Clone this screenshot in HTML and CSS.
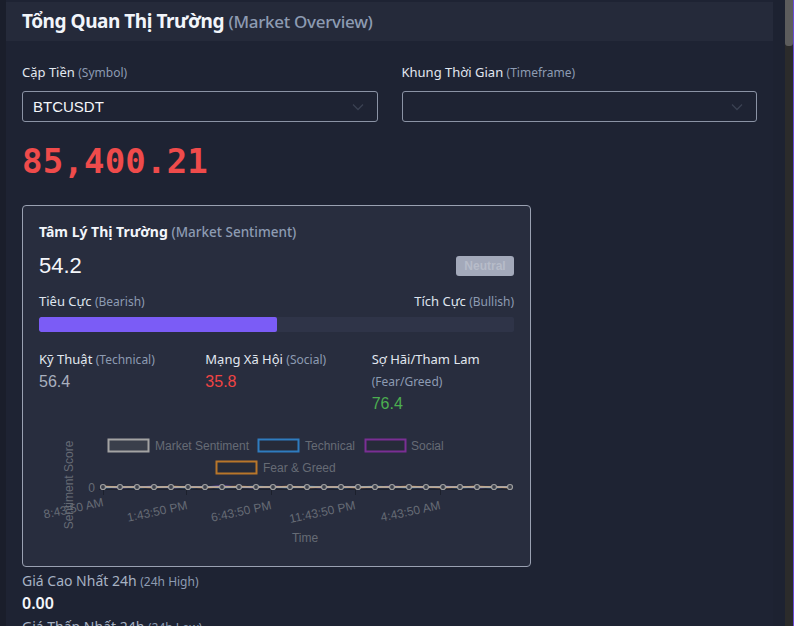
FILE: index.html
```html
<!DOCTYPE html>
<html lang="vi">
<head>
<meta charset="utf-8">
<title>Market Overview</title>
<link rel="stylesheet" href="styles.css">
</head>
<body>
<div class="app">
  <div class="page">
    <div class="strip"></div>
    <main class="main">
      <header class="hdr">
        <h1>Tổng Quan Thị Trường <span class="en">(Market Overview)</span></h1>
      </header>
      <div class="content">
        <div class="fields">
          <div class="field">
            <div class="label">Cặp Tiền <span class="en">(Symbol)</span></div>
            <div class="select">
              <span class="val">BTCUSDT</span>
              <svg class="chev" width="12" height="8" viewBox="0 0 12 8"><path d="M1 1.5l5 5 5-5" fill="none" stroke="currentColor" stroke-width="1.3"/></svg>
            </div>
          </div>
          <div class="field">
            <div class="label">Khung Thời Gian <span class="en">(Timeframe)</span></div>
            <div class="select">
              <span class="val"></span>
              <svg class="chev" width="12" height="8" viewBox="0 0 12 8"><path d="M1 1.5l5 5 5-5" fill="none" stroke="currentColor" stroke-width="1.3"/></svg>
            </div>
          </div>
        </div>

        <div class="price">85,400.21</div>

        <section class="card">
          <h2>Tâm Lý Thị Trường <span class="en">(Market Sentiment)</span></h2>
          <div class="score-row">
            <div class="score">54.2</div>
            <div class="badge">Neutral</div>
          </div>
          <div class="bear-bull">
            <span>Tiêu Cực <span class="en">(Bearish)</span></span>
            <span>Tích Cực <span class="en">(Bullish)</span></span>
          </div>
          <div class="bar"><div class="fill" style="width:50.1%"></div></div>

          <div class="metrics">
            <div class="metric">
              <div class="m-label">Kỹ Thuật <span class="en">(Technical)</span></div>
              <div class="m-val grey">56.4</div>
            </div>
            <div class="metric">
              <div class="m-label">Mạng Xã Hội <span class="en">(Social)</span></div>
              <div class="m-val red">35.8</div>
            </div>
            <div class="metric">
              <div class="m-label">Sợ Hãi/Tham Lam <span class="en">(Fear/Greed)</span></div>
              <div class="m-val green">76.4</div>
            </div>
          </div>

          <svg class="chart" width="475" height="129" viewBox="0 0 475 129">
            <g class="legend">
              <rect x="69.5" y="19.5" width="40" height="12" fill="#3a3f4b" stroke="#a3a3a3" stroke-width="2"/>
              <text x="116" y="29.5">Market Sentiment</text>
              <rect x="219.5" y="19.5" width="40" height="12" fill="#262b39" stroke="#2f7cbf" stroke-width="2"/>
              <text x="266" y="29.5">Technical</text>
              <rect x="326.5" y="19.5" width="40" height="12" fill="#262b39" stroke="#7a2f94" stroke-width="2"/>
              <text x="372" y="29.5">Social</text>
              <rect x="177.5" y="41.5" width="40" height="12" fill="#262b39" stroke="#b8762a" stroke-width="2"/>
              <text x="224" y="51.5">Fear &amp; Greed</text>
            </g>
            <text class="ax" transform="translate(34 65) rotate(-90)" text-anchor="middle">Sentiment Score</text>
            <text class="ax" x="56" y="72" text-anchor="end">0</text>
            <line x1="60" y1="69.5" x2="472" y2="69.5" stroke="#1c202c" stroke-width="1"/>
            <g stroke="#1c202c" stroke-width="1">
              <line x1="64.5" y1="69" x2="64.5" y2="75"/>
              <line x1="147.5" y1="69" x2="147.5" y2="75"/>
              <line x1="232.5" y1="69" x2="232.5" y2="75"/>
              <line x1="316.5" y1="69" x2="316.5" y2="75"/>
              <line x1="401.5" y1="69" x2="401.5" y2="75"/>
            </g>
            <g class="ax">
              <text transform="translate(65 86) rotate(-12)" text-anchor="end">8:43:50 AM</text>
              <text transform="translate(149 89) rotate(-12)" text-anchor="end">1:43:50 PM</text>
              <text transform="translate(233 89) rotate(-12)" text-anchor="end">6:43:50 PM</text>
              <text transform="translate(317 89) rotate(-12)" text-anchor="end">11:43:50 PM</text>
              <text transform="translate(402 89) rotate(-12)" text-anchor="end">4:43:50 AM</text>
              <text x="266" y="122" text-anchor="middle">Time</text>
            </g>
            <g fill="none" stroke-width="1.5">
              <polyline stroke="#9966ff" points="64,67 81,67.5 98,67 115,66.5 132,67.5 149,67 166,67 183,66.2 200,67 217,67.5 234,66.5 251,67 268,67 285,67.5 302,66.8 319,67 336,67 353,66.5 370,67 387,67.5 404,66.5 421,67 438,67.5 455,67 471,67"/>
              <polyline stroke="#36a2eb" points="64,67.5 81,67 98,67.5 115,67 132,67 149,67.5 166,67 183,67.5 200,67 217,66.5 234,67 251,67.5 268,66.5 285,67 302,67.5 319,67 336,66.6 353,67 370,67.5 387,67 404,67 421,67.5 438,67 455,67.5 471,67"/>
              <polyline stroke="#ff9f40" points="64,66.6 81,67 98,67 115,67.5 132,66.5 149,67 166,67.5 183,67 200,66.5 217,67 234,67 251,66.5 268,67.5 285,67 302,67 319,67.5 336,67 353,67 370,66.5 387,67 404,67.5 421,67 438,66.5 455,67 471,67.5"/>
              <polyline stroke="#a8a8a8" points="64,67 81,67 98,67 115,67 132,67 149,67 166,67 183,67 200,67 217,67 234,67 251,67 268,67 285,67 302,67 319,67 336,67 353,67 370,67 387,67 404,67 421,67 438,67 455,67 471,67"/>
            </g>
            <g fill="#3b3f4a" stroke="#a0a0a0" stroke-width="1.2">
              <circle cx="64" cy="67" r="2.5"/><circle cx="81" cy="67" r="2.5"/><circle cx="98" cy="67" r="2.5"/><circle cx="115" cy="67" r="2.5"/><circle cx="132" cy="67" r="2.5"/><circle cx="149" cy="67" r="2.5"/><circle cx="166" cy="67" r="2.5"/><circle cx="183" cy="67" r="2.5"/><circle cx="200" cy="67" r="2.5"/><circle cx="217" cy="67" r="2.5"/><circle cx="234" cy="67" r="2.5"/><circle cx="251" cy="67" r="2.5"/><circle cx="268" cy="67" r="2.5"/><circle cx="285" cy="67" r="2.5"/><circle cx="302" cy="67" r="2.5"/><circle cx="319" cy="67" r="2.5"/><circle cx="336" cy="67" r="2.5"/><circle cx="353" cy="67" r="2.5"/><circle cx="370" cy="67" r="2.5"/><circle cx="387" cy="67" r="2.5"/><circle cx="404" cy="67" r="2.5"/><circle cx="421" cy="67" r="2.5"/><circle cx="438" cy="67" r="2.5"/><circle cx="455" cy="67" r="2.5"/><circle cx="471" cy="67" r="2.5"/>
            </g>
          </svg>
        </section>

        <div class="stat">
          <div class="s-label">Giá Cao Nhất 24h <span class="en">(24h High)</span></div>
          <div class="s-val">0.00</div>
        </div>
        <div class="stat">
          <div class="s-label">Giá Thấp Nhất 24h <span class="en">(24h Low)</span></div>
          <div class="s-val">0.00</div>
        </div>
      </div>
    </main>
    <div class="gutter"></div>
  </div>
  <div class="scrollbar"><div class="thumb"></div></div>
</div>
</body>
</html>
```

FILE: styles.css
```css
* { box-sizing: border-box; }
html, body { margin: 0; padding: 0; }
body {
  background: #1e2333;
  font-family: "Noto Sans", "Open Sans", sans-serif;
  color: #e4e9f0;
  overflow: hidden;
}
.app { display: flex; width: 794px; height: 626px; overflow: hidden; }
.page { display: flex; width: 785px; height: 626px; }
.strip { width: 6px; background: #1a1e2b; flex: none; }
.main { width: 767px; flex: none; padding-top: 2px; }
.gutter { flex: 1; background: #1d2231; }
.scrollbar { width: 9px; background: #2b2b2b; border-right: 1px solid #6a4cd9; flex: none; }
.thumb { height: 46px; background: #5c5c5c; border-radius: 0 0 3px 3px; }

.hdr {
  height: 39px;
  background: #252a3a;
  padding: 0 16px 1px;
  display: flex;
  align-items: center;
}
.hdr h1 {
  margin: 0;
  font-size: 19px;
  font-weight: 700;
  color: #f2f5fa;
  letter-spacing: -0.45px;
}
.hdr h1 .en { font-weight: 500; color: #8d9bb2; font-size: 17px; letter-spacing: -0.3px; }

.en { color: #8d9bb2; font-weight: 400; font-size: 0.85em; }

.content { padding: 22px 16px 0; }

.fields { display: flex; gap: 24px; }
.field { flex: 1; }
.label { font-size: 13px; line-height: 18px; color: #e2e8f0; }
.label .en { font-size: 12px; }
.select {
  margin-top: 9px;
  height: 31px;
  border: 1px solid #8b93a5;
  border-radius: 3px;
  display: flex;
  align-items: center;
  justify-content: space-between;
  padding: 0 13px 0 10px;
}
.select .val { font-family: "Liberation Sans", Arial, sans-serif; font-size: 15px; color: #f4f6fa; }
.chev { color: #3a4152; }

.price {
  margin-top: 19px;
  font-family: "DejaVu Sans Mono", "Liberation Mono", monospace;
  font-weight: 700;
  font-size: 34px;
  line-height: 40px;
  color: #ef4b4b;
  letter-spacing: 0.2px;
}

.card {
  margin-top: 24px;
  width: 509px;
  background: #282d3e;
  border: 1px solid #9aa1b2;
  border-radius: 4px;
  padding: 16px 16px 17px;
}
.card h2 {
  margin: 0;
  font-size: 14px;
  line-height: 20px;
  font-weight: 700;
  color: #f2f5fa;
}
.card h2 .en { font-size: 13.5px; font-weight: 500; }
.score-row { margin-top: 10px; display: flex; justify-content: space-between; align-items: center; height: 28px; }
.score { font-family: "Liberation Sans", Arial, sans-serif; font-size: 22px; color: #f4f6fa; }
.badge {
  background: #a3a9ba;
  color: #b7bcc9;
  font-family: "Liberation Sans", Arial, sans-serif;
  font-weight: 700;
  font-size: 12px;
  border-radius: 3px;
  width: 58px;
  height: 20px;
  display: flex;
  align-items: center;
  justify-content: center;
}
.bear-bull {
  margin-top: 12px;
  display: flex;
  justify-content: space-between;
  font-size: 13px;
  line-height: 18px;
  color: #dfe5ee;
}
.bear-bull .en { font-size: 12px; }
.bar { margin-top: 6px; height: 15px; background: #2f3448; border-radius: 2px; overflow: hidden; }
.fill { height: 100%; background: #7b5cf6; border-radius: 2px; }

.metrics { margin-top: 16px; display: grid; grid-template-columns: repeat(3, 1fr); column-gap: 24px; }
.m-label { font-size: 13px; line-height: 22px; color: #e2e8f0; }
.m-label .en { font-size: 12px; }
.m-val { font-family: "Liberation Sans", Arial, sans-serif; font-size: 16px; line-height: 22px; }
.grey { color: #a9b0bf; }
.red { color: #ef4444; }
.green { color: #4caf50; }

.chart { display: block; margin-top: 5px; }
.chart text { font-family: "Liberation Sans", Arial, sans-serif; font-size: 12px; fill: #666b75; }

.stat { margin-top: 4px; }
.s-label { font-size: 14px; line-height: 19px; color: #a7b2c4; }
.s-label .en { font-size: 12px; }
.s-val { margin-top: 2px; font-size: 16px; font-weight: 600; line-height: 20px; color: #f4f6fa; }
```
